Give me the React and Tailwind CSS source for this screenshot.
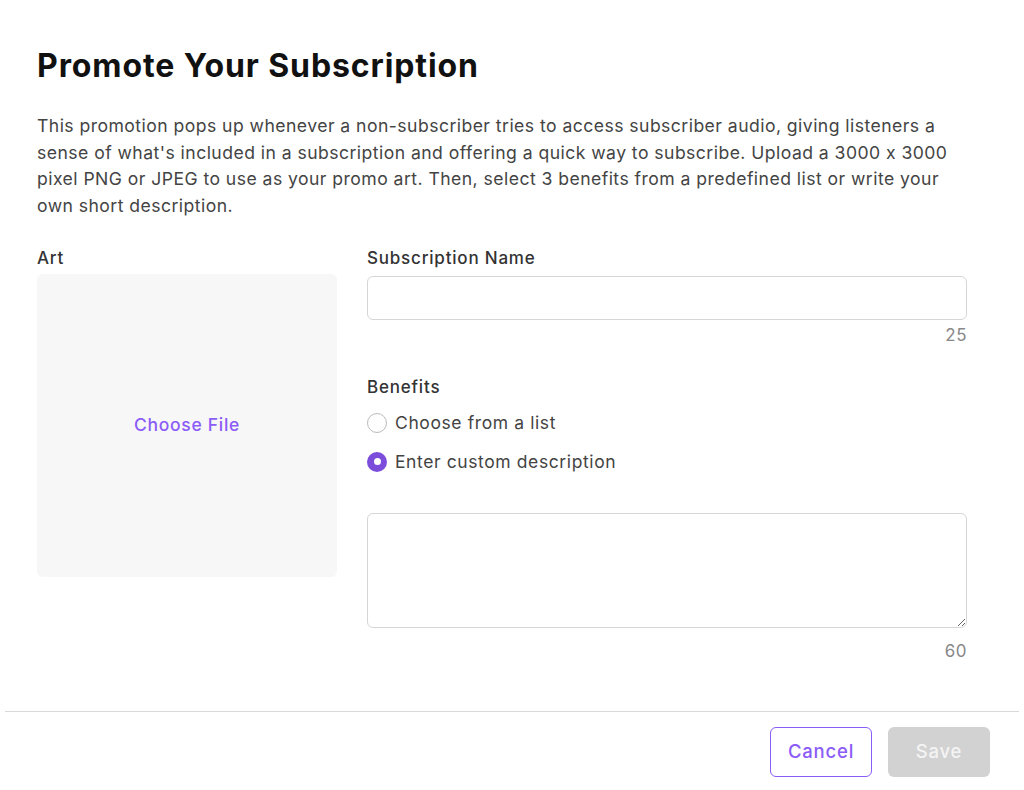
import React from "react";

export default function App() {
  return (
    <div className="w-[1024px] h-[790px] bg-white overflow-hidden" style={{ fontFamily: "Inter, 'Noto Sans', sans-serif" }}>
      <div className="pl-[37px] pr-[57px] pt-[46px]">
        <h1 className="text-[32px] leading-[40px] font-bold text-[#111] tracking-[0.9px]">Promote Your Subscription</h1>
        <p className="mt-[27px] text-[17.6px] leading-[26.7px] text-[#444] tracking-[0.45px]">
          This promotion pops up whenever a non-subscriber tries to access subscriber audio, giving listeners a sense of what's included in a subscription and offering a quick way to subscribe. Upload a 3000 x 3000 pixel PNG or JPEG to use as your promo art. Then, select 3 benefits from a predefined list or write your own short description.
        </p>
        <div className="mt-[28px] flex gap-[30px]">
          <div className="w-[300px] flex flex-col">
            <div className="text-[17px] leading-[20px] font-medium text-[#333] tracking-[0.8px]">Art</div>
            <div className="mt-[6px] h-[303px] rounded-[6px] bg-[#f7f7f7] flex items-center justify-center">
              <span className="text-[17.5px] font-medium text-[#8b5cf6] tracking-[0.7px]">Choose File</span>
            </div>
          </div>
          <div className="flex-1 flex flex-col">
            <div className="text-[17px] leading-[20px] font-medium text-[#333] tracking-[0.8px]">Subscription Name</div>
            <div className="mt-[8px] h-[44px] rounded-[6px] border border-[#d6d6d6]"></div>
            <div className="mt-[4px] text-right text-[17px] leading-[22px] text-[#888] tracking-[0.5px]">25</div>
            <div className="mt-[31px] text-[17px] leading-[20px] font-medium text-[#333] tracking-[0.8px]">Benefits</div>
            <div className="mt-[16px] flex items-center gap-[8px]">
              <span className="w-[20px] h-[20px] rounded-full border-[1.5px] border-[#bbb] bg-white"></span>
              <span className="text-[17.5px] leading-[20px] text-[#444] tracking-[0.6px]">Choose from a list</span>
            </div>
            <div className="mt-[19px] flex items-center gap-[8px]">
              <span className="w-[20px] h-[20px] rounded-full bg-[#7c4ddb] flex items-center justify-center">
                <span className="w-[7px] h-[7px] rounded-full bg-white"></span>
              </span>
              <span className="text-[17.5px] leading-[20px] text-[#444] tracking-[0.6px]">Enter custom description</span>
            </div>
            <textarea className="mt-[41px] h-[115px] w-full rounded-[6px] border border-[#d6d6d6] resize-y outline-none"></textarea>
            <div className="mt-[12px] text-right text-[17px] leading-[22px] text-[#888] tracking-[0.5px]">60</div>
          </div>
        </div>
      </div>
      <div className="mx-[5px] mt-[49px] border-t border-[#d9d9d9]"></div>
      <div className="flex justify-end gap-[16px] pr-[34px] mt-[15px]">
        <button className="w-[102px] h-[50px] rounded-[6px] border-[1.5px] border-[#8b5cf6] bg-white text-[18.5px] font-medium text-[#8b5cf6] tracking-[0.8px]">Cancel</button>
        <button className="w-[102px] h-[50px] rounded-[6px] bg-[#d2d2d2] text-[18.5px] font-medium text-[#f4f4f4] tracking-[0.8px]">Save</button>
      </div>
    </div>
  );
}
